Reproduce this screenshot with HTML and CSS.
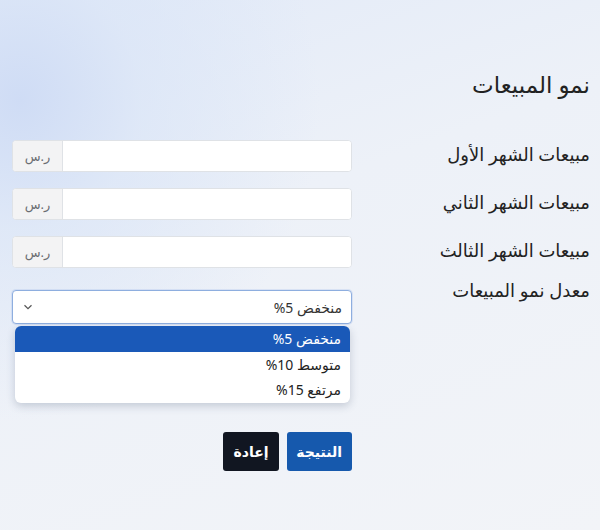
FILE: index.html
```html
<!DOCTYPE html>
<html lang="ar" dir="rtl">
<head>
<meta charset="utf-8">
<title>نمو المبيعات</title>
<link rel="stylesheet" href="styles.css">
</head>
<body>
<main class="page">
  <h1 class="title">نمو المبيعات</h1>
  <form class="form">
    <label class="label">مبيعات الشهر الأول</label>
    <div class="group"><input class="input" type="text"><span class="addon">ر.س</span></div>

    <label class="label">مبيعات الشهر الثاني</label>
    <div class="group"><input class="input" type="text"><span class="addon">ر.س</span></div>

    <label class="label">مبيعات الشهر الثالث</label>
    <div class="group"><input class="input" type="text"><span class="addon">ر.س</span></div>

    <label class="label label-select">معدل نمو المبيعات</label>
    <div class="select-wrap">
      <div class="select">
        <span>منخفض 5%</span>
        <svg class="chev" width="10" height="6" viewBox="0 0 10 6"><path d="M1.5 1.2 L5 4.6 L8.5 1.2" fill="none" stroke="#555" stroke-width="1.2"/></svg>
      </div>
      <ul class="menu">
        <li class="opt active">منخفض 5%</li>
        <li class="opt">متوسط 10%</li>
        <li class="opt">مرتفع 15%</li>
      </ul>
    </div>

    <div class="actions">
      <button type="button" class="btn btn-primary">النتيجة</button>
      <button type="button" class="btn btn-dark">إعادة</button>
    </div>
  </form>
</main>
</body>
</html>
```
FILE: styles.css
```css
* { box-sizing: border-box; }
html, body { margin: 0; height: 100%; }
body {
  font-family: "Noto Sans", "DejaVu Sans", sans-serif;
  color: #222;
  background:
    radial-gradient(ellipse 300px 320px at 20px 100px, #cfdcf5 0%, rgba(218,229,247,0.7) 40%, rgba(240,243,248,0) 100%),
    linear-gradient(160deg, #e2eaf8 0%, #edf1f8 40%, #f2f4f8 100%);
  width: 600px;
  height: 530px;
  overflow: hidden;
}
.page {
  padding: 68px 10px 0 12px;
}
.title {
  margin: 0 0 40px;
  font-size: 23px;
  font-weight: 500;
  line-height: 32px;
  color: #222;
}
.form {
  display: grid;
  grid-template-columns: 1fr 340px;
  row-gap: 16px;
  align-items: center;
}
.label {
  font-size: 18px;
  line-height: 24px;
  padding-bottom: 5px;
  color: #222;
}
.label-select { align-self: start; margin-top: -6px; padding-bottom: 0; }
.group {
  display: flex;
  height: 32px;
  border: 1px solid #dfe2e6;
  border-radius: 4px;
  overflow: hidden;
  background: #fff;
}
.input {
  flex: 1;
  min-width: 0;
  border: 0;
  outline: 0;
  background: #fff;
  border-radius: 0;
}
.addon {
  width: 50px;
  background: #f3f3f4;
  border-right: 1px solid #dfe2e6;
  color: #6a6d72;
  font-size: 13px;
  display: flex;
  align-items: center;
  justify-content: center;
}
.select-wrap {
  position: relative;
  margin-top: 6px;
}
.select {
  height: 34px;
  border: 1px solid #8eaedf;
  border-radius: 4px;
  background: #fff;
  display: flex;
  align-items: center;
  justify-content: space-between;
  padding: 0 9px 0 10px;
  font-size: 14px;
  color: #333;
  box-shadow: 0 0 0 1px rgba(150,180,230,0.25);
}
.chev { display: block; }
.menu {
  position: absolute;
  top: 36px;
  left: 3px;
  right: 2px;
  margin: 0;
  padding: 0;
  list-style: none;
  background: #fff;
  border-radius: 6px;
  overflow: hidden;
  box-shadow: 0 3px 8px rgba(40,60,90,0.22);
  z-index: 2;
}
.opt {
  height: 25.5px;
  padding: 0 9px;
  font-size: 14px;
  line-height: 25px;
  color: #222;
}
.opt.active { background: #1a59b8; color: #fff; }
.actions {
  grid-column: 2;
  display: flex;
  gap: 8px;
  margin-top: 92px;
}
.btn {
  height: 39px;
  border: 0;
  border-radius: 3px;
  font-family: inherit;
  font-size: 14px;
  font-weight: 600;
  padding: 0 10px;
  color: #fff;
}
.btn-primary { background: #1659ad; width: 65px; }
.btn-dark { background: #111621; width: 56px; }
```
